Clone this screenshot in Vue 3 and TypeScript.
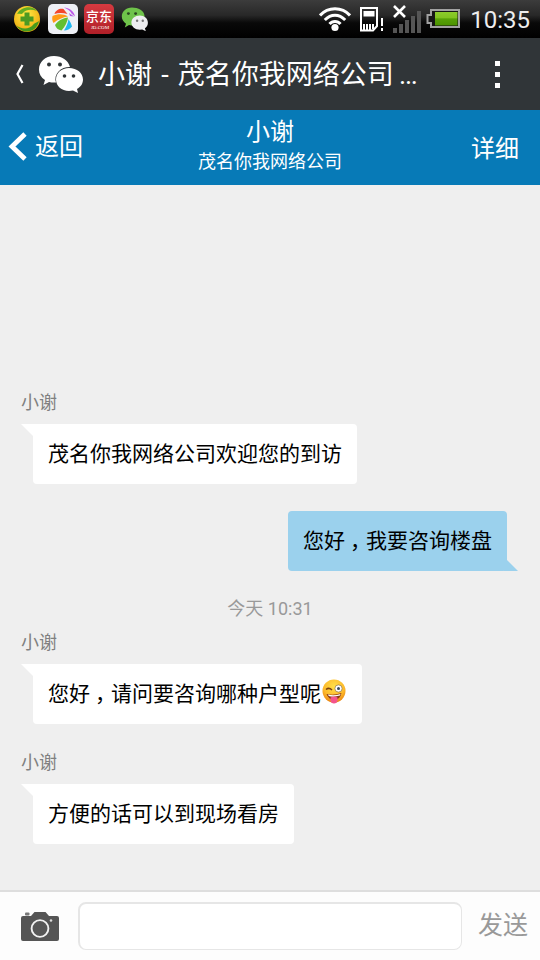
<script setup lang="ts">
interface Message {
  id: number
  kind: 'in' | 'out' | 'time'
  sender?: string
  parts?: string[]
  text?: string
  emoji?: boolean
}

const contact = '小谢'
const company = '茂名你我网络公司'

const messages: Message[] = [
  { id: 1, kind: 'in', sender: contact, parts: ['茂名你我网络公司欢迎您的到访'] },
  { id: 2, kind: 'out', parts: ['您好', '我要咨询楼盘'] },
  { id: 3, kind: 'time', text: '今天 10:31' },
  { id: 4, kind: 'in', sender: contact, parts: ['您好', '请问要咨询哪种户型呢'], emoji: true },
  { id: 5, kind: 'in', sender: contact, parts: ['方便的话可以到现场看房'] },
]

const signalBars = [5, 9, 13, 17, 22]
</script>

<template>
  <div class="screen">
    <div class="status">
      <div class="apps">
        <svg class="app-360" width="28" height="28" viewBox="0 0 28 28">
          <defs>
            <radialGradient id="gold" cx="45%" cy="35%" r="65%">
              <stop offset="0" stop-color="#fff04a" />
              <stop offset="1" stop-color="#f0a80c" />
            </radialGradient>
          </defs>
          <circle cx="14" cy="14" r="13" fill="url(#gold)" />
          <path d="M4 9C8 1 20 0 24 6C19 4 13 4 10 8C8 10 7 8 4 9Z" fill="#63ad22" />
          <path d="M3 20C7 24 16 25 20 20C22 17 24 18 26 16C24 27 10 31 3 20Z" fill="#459a1d" />
          <path d="M11.5 7.5h5v4h4v5h-4v4h-5v-4h-4v-5h4z" fill="#4c9a22" />
        </svg>
        <svg class="app-gallery" width="30" height="30" viewBox="0 0 30 30">
          <rect width="30" height="30" rx="5" fill="#eef0f6" />
          <path d="M6.500 10C7.500 6 12 4 15.500 5L19.500 10C15 8.500 10 8.500 6.500 10Z" fill="#f3472c" />
          <path d="M4.500 12C10 9.500 16 10 20 12.500C15 13 10 15.500 5.500 19C4 17 4 14 4.500 12Z" fill="#ff9b16" />
          <path d="M7 21C10 16.500 15 14 20 13.500C19.500 18 17 22.500 13.500 26.500C10 26 8 24 7 21Z" fill="#62bf32" />
          <path d="M20.500 15C22 17.500 23.500 20 24 22.500C22 25 19 26.500 16 26.500C18.500 22.500 20 19 20.500 15Z" fill="#20b8f0" />
          <path d="M16 3.500C21 3.500 26 7 27 12.500L23.500 9.500C22 6.500 19.500 5 16 3.500Z" fill="#be58e8" />
          <path d="M21 9L26 12.500L22 12Z" fill="#b25be0" />
        </svg>
        <svg class="app-jd" width="30" height="30" viewBox="0 0 30 30">
          <defs>
            <linearGradient id="red" x2="0" y2="1">
              <stop offset="0" stop-color="#d63a40" />
              <stop offset="1" stop-color="#b01f28" />
            </linearGradient>
          </defs>
          <rect width="30" height="30" rx="5" fill="url(#red)" />
          <text x="15" y="17" class="jd-name">京东</text>
          <text x="16" y="25" class="jd-site">JD.COM</text>
        </svg>
        <svg class="app-wechat" width="28" height="24" viewBox="0 0 46 40">
          <path d="M18 1C8 1 1 8 1 16c0 5 3 9 7 12l-2 6 7-4c17 4 26-4 26-14S28 1 18 1Z" fill="#6fc34a" />
          <path d="M31 14c-8 0-14 5-14 12s6 12 14 12l4-.7 6 3-1.500-5c3-2 5-5 5-9 0-7-6-12-13.500-12Z" fill="#eeeef0" />
          <circle cx="12" cy="11" r="2.400" fill="#29471f" /><circle cx="24" cy="11" r="2.400" fill="#29471f" />
          <circle cx="26.500" cy="23" r="2" fill="#777" /><circle cx="36" cy="23" r="2" fill="#777" />
        </svg>
      </div>
      <div class="indicators">
        <svg class="wifi" width="32" height="26" viewBox="0 0 32 26" fill="none" stroke="#fff" stroke-width="3">
          <path d="M1 9.500C9 0.500 23 0.500 31 9.500" />
          <path d="M5.800 14C12 7.500 20 7.500 26.200 14" />
          <path d="M10.500 18C13.500 14.500 18.500 14.500 21.500 18" />
          <circle cx="16" cy="21.500" r="3.600" fill="#fff" stroke="none" />
        </svg>
        <svg class="sim" width="24" height="25" viewBox="0 0 24 25">
          <path d="M1 1H17V19L13 23.500H1Z" fill="none" stroke="#fff" stroke-width="2" />
          <path d="M3.500 4H14.500V9.500H3.500Z M3 17h2v6h-2z M6 17h2v6h-2z M9 17h2v6h-2z M12 17h2v5h-2z" fill="#fff" />
          <path d="M21 11h2v8h-2z M21 21h2v3h-2z" fill="#fff" />
        </svg>
        <div class="signal">
          <span v-for="h in signalBars" :key="h" class="bar" :style="{ height: h + 'px' }" />
          <svg class="cross" width="13" height="13" viewBox="0 0 13 13">
            <path d="M1 1L12 12M12 1L1 12" stroke="#fff" stroke-width="2.600" />
          </svg>
        </div>
        <svg class="battery" width="35" height="20" viewBox="0 0 35 20">
          <defs>
            <linearGradient id="charge" x2="0" y2="1">
              <stop offset="0" stop-color="#8ccc2c" /><stop offset=".45" stop-color="#80c21f" />
              <stop offset=".5" stop-color="#58a208" /><stop offset="1" stop-color="#4c9300" />
            </linearGradient>
          </defs>
          <path d="M5 1H33V18H5V14H1.500V6H5Z" fill="#171717" stroke="#a2a2a2" stroke-width="2" />
          <rect x="9" y="3" width="22.500" height="13.500" fill="url(#charge)" />
        </svg>
        <span class="clock">10:35</span>
      </div>
    </div>

    <header class="titlebar">
      <svg class="chev" width="9" height="20" viewBox="0 0 9 20">
        <path d="M7.500 1L2.500 10L7.500 19" fill="none" stroke="#fff" stroke-width="2.200" />
      </svg>
      <svg class="logo" width="46" height="38" viewBox="0 0 46 38">
        <path d="M16 1C7 1 1 7 1 14.500c0 4.500 2 8 6 10.500L5.500 30l5.500-3c2.500.6 4.500.7 7 .5A14 12 0 0 1 32 12C30 5 24 1 16 1Z" fill="#fff" />
        <path d="M31 13C23.500 13 18 18 18 24.500S23.500 36 31 36l4-.6 5 2.600-1-4c3.500-2 6-5 6-9.500C45 18 39 13 31 13Z" fill="#fff" />
        <g fill="#303538"><circle cx="11" cy="9.500" r="2" /><circle cx="22" cy="9.500" r="2" /><circle cx="26.500" cy="21" r="1.800" /><circle cx="35.500" cy="21" r="1.800" /></g>
      </svg>
      <h1 class="title">{{ contact }} - {{ company }} <span class="dots">...</span></h1>
      <div class="more"><i /><i /><i /></div>
    </header>

    <nav class="nav">
      <div class="back">
        <svg width="19" height="30" viewBox="0 0 19 30">
          <path d="M17 2L4 14.500L17 27" fill="none" stroke="#fff" stroke-width="4.800" />
        </svg>
        <span>返回</span>
      </div>
      <div class="who">
        <div class="name">{{ contact }}</div>
        <div class="company">{{ company }}</div>
      </div>
      <div class="detail">详细</div>
    </nav>

    <main class="chat">
      <div v-for="m in messages" :key="m.id" class="row" :class="m.kind">
        <template v-if="m.kind === 'time'">{{ m.text }}</template>
        <template v-else>
          <div v-if="m.sender" class="sender">{{ m.sender }}</div>
          <div class="bubble">
            <template v-for="(p, i) in m.parts" :key="i"><span v-if="i > 0" class="comma">，</span>{{ p }}</template>
            <svg v-if="m.emoji" class="emoji" width="24" height="25" viewBox="0 0 24 25">
              <defs>
                <radialGradient id="face" cx="50%" cy="30%" r="70%">
                  <stop offset="0" stop-color="#ffe04a" /><stop offset=".65" stop-color="#fdb92a" /><stop offset="1" stop-color="#ea8410" />
                </radialGradient>
              </defs>
              <circle cx="12" cy="12" r="11.500" fill="url(#face)" />
              <path d="M4 10.500Q7 8 10 11" fill="none" stroke="#7a4210" stroke-width="1.500" />
              <circle cx="16.500" cy="9.500" r="3.600" fill="#fff" stroke="#8a7450" stroke-width=".7" />
              <circle cx="16.500" cy="9.500" r="1.500" fill="#34495c" />
              <path d="M4.500 15Q12 17 19.500 14Q18 21 12 21Q6.500 20.500 4.500 15Z" fill="#8a3514" />
              <path d="M6 15.600Q12 17.200 18.500 15L18 16.500Q12 18.500 6.700 17Z" fill="#fff" />
              <path d="M8.500 18.500Q12 16.500 15.500 18.500V21.500Q15 24.500 12 24.500T8.500 21.500Z" fill="#f4548c" />
            </svg>
          </div>
        </template>
      </div>
    </main>

    <footer class="composer">
      <svg class="camera" width="40" height="31" viewBox="0 0 40 31">
        <path d="M3 5H11L14.500 1H25.500L29 5H37Q39 5 39 7V28Q39 30 37 30H3Q1 30 1 28V7Q1 5 3 5Z" fill="#555" />
        <rect x="5" y="1.500" width="4.500" height="3" rx="1" fill="#777" />
        <circle cx="20" cy="17.500" r="8.400" fill="#575757" stroke="#f2f2f2" stroke-width="1.900" />
        <circle cx="31" cy="9.500" r="1.300" fill="#ddd" />
      </svg>
      <input class="field" type="text" />
      <span class="send">发送</span>
    </footer>
  </div>
</template>

<style>
body {
  margin: 0;
  background: #efefef;
}
</style>

<style scoped>
.screen {
  width: 540px;
  height: 960px;
  display: flex;
  flex-direction: column;
  overflow: hidden;
  background: #efefef;
  font-family: Roboto, "Noto Sans CJK SC", sans-serif;
}
svg {
  display: block;
  flex: none;
}
.status {
  height: 38px;
  flex: none;
  display: flex;
  justify-content: space-between;
  align-items: center;
  padding: 0 10px 0 13px;
  box-sizing: border-box;
  background: linear-gradient(#3c3c3c 0, #282828 40%, #090909 60%, #000 100%);
}
.apps,
.indicators {
  display: flex;
  align-items: center;
}
.app-gallery {
  margin-left: 7px;
}
.app-jd {
  margin-left: 6px;
}
.app-wechat {
  margin-left: 7px;
}
.jd-name {
  font: 500 13px "Noto Sans CJK SC", sans-serif;
  fill: #fff;
  text-anchor: middle;
}
.jd-site {
  font: 5px "Liberation Serif", serif;
  fill: #fff;
  text-anchor: middle;
}
.sim {
  margin-left: 9px;
}
.signal {
  position: relative;
  display: flex;
  align-items: flex-end;
  gap: 2px;
  height: 28px;
  margin: 0 5px 0 9px;
}
.bar {
  width: 4px;
  background: #555;
}
.cross {
  position: absolute;
  left: 0;
  top: 0;
}
.clock {
  margin-left: 9px;
  padding-top: 1px;
  font-size: 24px;
  line-height: 38px;
  color: #eee;
}
.titlebar {
  height: 72px;
  flex: none;
  display: flex;
  align-items: center;
  padding: 0 40px 0 15px;
  box-sizing: border-box;
  background: #303538;
  color: #fff;
}
.logo {
  margin-left: 14px;
}
.title {
  flex: 1;
  margin: 0 0 0 14px;
  padding-top: 2px;
  font-size: 27px;
  font-weight: 400;
  line-height: 36px;
  white-space: nowrap;
  word-spacing: 2.5px;
}
.dots {
  margin-left: -4px;
  letter-spacing: -1.3px;
}
.more {
  display: flex;
  flex-direction: column;
  gap: 6px;
}
.more i {
  width: 5px;
  height: 5px;
  background: #fff;
}
.nav {
  height: 75px;
  flex: none;
  display: grid;
  grid-template-columns: 1fr auto 1fr;
  align-items: center;
  padding: 0 21px 2px 8px;
  box-sizing: border-box;
  background: #077ab7;
  color: #fff;
  font-size: 24px;
}
.back {
  display: flex;
  align-items: center;
  gap: 8px;
  padding-top: 1px;
  line-height: 30px;
}
.who {
  text-align: center;
  margin-left: 13px;
}
.name {
  line-height: 30px;
}
.company {
  font-size: 18px;
  line-height: 30px;
}
.detail {
  text-align: right;
}
.chat {
  flex: 1;
  min-height: 0;
  display: flex;
  flex-direction: column;
  justify-content: flex-end;
  padding: 0 33px 46px;
}
.row {
  display: flex;
  flex-direction: column;
  align-items: flex-start;
}
.in + .in {
  margin-top: 24px;
}
.sender {
  margin-left: -12px;
  height: 36px;
  font-size: 18px;
  line-height: 29px;
  color: #808080;
}
.bubble {
  position: relative;
  display: flex;
  height: 60px;
  padding: 0 15px;
  border-radius: 4px;
  background: #fff;
  color: #000;
  font-size: 21px;
  line-height: 60px;
  white-space: nowrap;
}
.in .bubble::before {
  content: "";
  position: absolute;
  left: -12px;
  top: 0;
  width: 16px;
  height: 16px;
  background: #fff;
  clip-path: polygon(0 0, 100% 0, 100% 100%);
}
.out {
  align-items: flex-end;
  margin-top: 27px;
}
.out .bubble {
  background: #9bd1ed;
}
.out .bubble::after {
  content: "";
  position: absolute;
  right: -11px;
  bottom: 0;
  width: 14px;
  height: 14px;
  background: #9bd1ed;
  clip-path: polygon(0 0, 100% 100%, 0 100%);
}
.comma {
  padding-left: 5px;
  letter-spacing: -5px;
}
.emoji {
  margin: 15px 1px 0 1px;
}
.time {
  align-items: center;
  height: 57px;
  font-size: 18px;
  line-height: 76px;
  color: #999;
}
.composer {
  height: 70px;
  flex: none;
  display: flex;
  align-items: center;
  padding: 0 12px 0 20px;
  box-sizing: border-box;
  border-top: 2px solid #dedede;
  background: #fdfdfd;
}
.field {
  flex: 1;
  min-width: 0;
  height: 48px;
  margin: 0 16px 0 18px;
  box-sizing: border-box;
  border: 2px solid #e6e6e6;
  border-width: 2px 1px 1px 2px;
  border-radius: 8px;
  background: #fff;
  outline: none;
}
.send {
  font-size: 25px;
  line-height: 36px;
  color: #999;
}
</style>
